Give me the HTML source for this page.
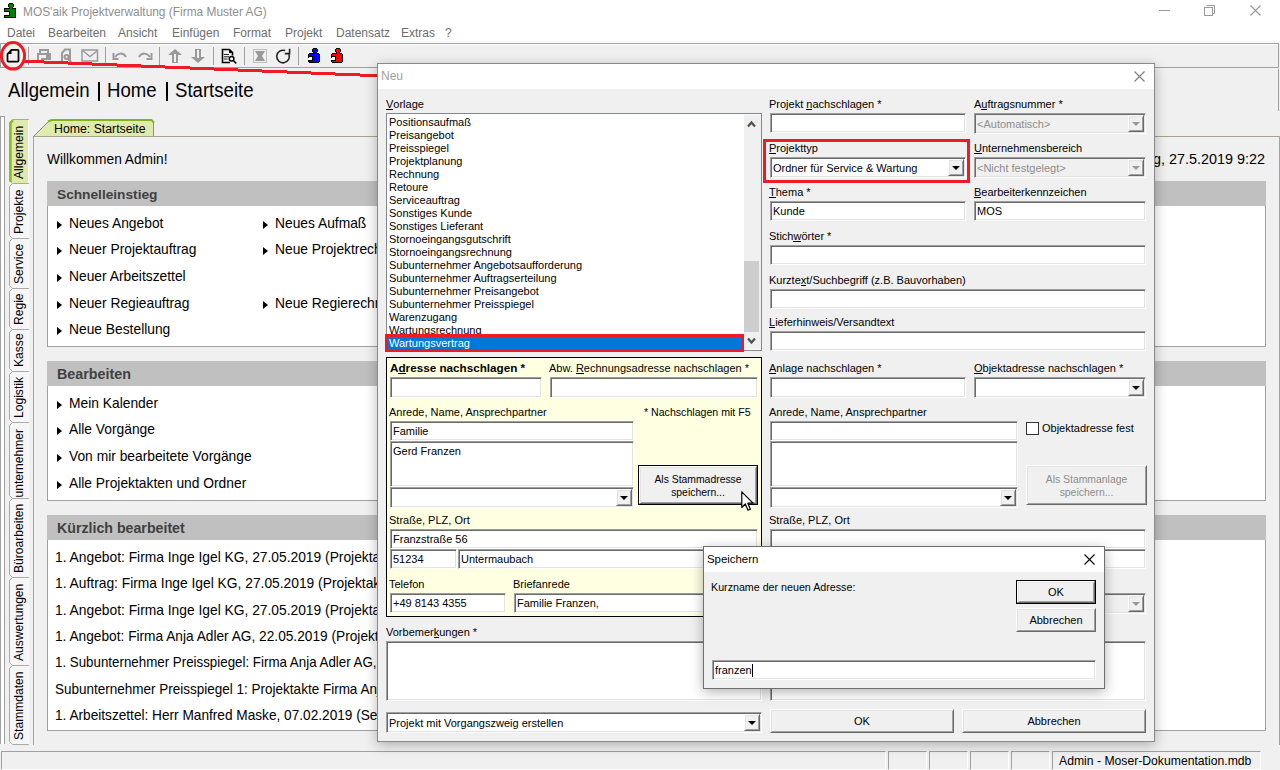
<!DOCTYPE html>
<html><head><meta charset="utf-8"><style>
html,body{margin:0;padding:0}
body{width:1280px;height:770px;overflow:hidden;position:relative;background:#f0f0f0;font-family:"Liberation Sans",sans-serif}
.a{position:absolute}
.t{position:absolute;white-space:nowrap;line-height:20px;font-family:"Liberation Sans",sans-serif}
.sk{border:1px solid;border-color:#a0a0a0 #fff #fff #a0a0a0;box-shadow:inset 1px 1px #696969,inset -1px -1px #e3e3e3}
.rs{border:1px solid;border-color:#fff #696969 #696969 #fff;box-shadow:inset 1px 1px #e3e3e3,inset -1px -1px #a0a0a0;background:#f0f0f0}
u{text-decoration:none;border-bottom:1px solid currentColor;line-height:10px;display:inline-block}
</style></head><body>

<div class="a" style="left:0px;top:0px;width:1280px;height:43px;background:#fff"></div>
<svg class="a" style="left:0;top:0" width="20" height="20" shape-rendering="crispEdges"><rect x="9" y="3" width="4" height="1" fill="#000"/><rect x="8" y="4" width="1" height="1" fill="#000"/><rect x="13" y="4" width="1" height="1" fill="#000"/><rect x="9" y="4" width="4" height="1" fill="#008000"/><rect x="8" y="5" width="1" height="1" fill="#000"/><rect x="13" y="5" width="1" height="1" fill="#000"/><rect x="9" y="5" width="4" height="1" fill="#008000"/><rect x="8" y="6" width="1" height="1" fill="#000"/><rect x="13" y="6" width="1" height="1" fill="#000"/><rect x="9" y="6" width="4" height="1" fill="#008000"/><rect x="9" y="7" width="1" height="1" fill="#000"/><rect x="12" y="7" width="1" height="1" fill="#000"/><rect x="10" y="7" width="2" height="1" fill="#008000"/><rect x="4" y="8" width="6" height="1" fill="#000"/><rect x="12" y="8" width="4" height="1" fill="#000"/><rect x="10" y="8" width="2" height="1" fill="#008000"/><rect x="4" y="9" width="1" height="1" fill="#000"/><rect x="15" y="9" width="1" height="1" fill="#000"/><rect x="5" y="9" width="10" height="1" fill="#008000"/><rect x="4" y="10" width="1" height="1" fill="#000"/><rect x="15" y="10" width="1" height="1" fill="#000"/><rect x="5" y="10" width="10" height="1" fill="#008000"/><rect x="4" y="11" width="6" height="1" fill="#000"/><rect x="15" y="11" width="1" height="1" fill="#000"/><rect x="10" y="11" width="5" height="1" fill="#008000"/><rect x="4" y="12" width="5" height="1" fill="#fff"/><rect x="9" y="12" width="1" height="1" fill="#000"/><rect x="15" y="12" width="1" height="1" fill="#000"/><rect x="10" y="12" width="5" height="1" fill="#008000"/><rect x="4" y="13" width="5" height="1" fill="#fff"/><rect x="9" y="13" width="1" height="1" fill="#000"/><rect x="15" y="13" width="1" height="1" fill="#000"/><rect x="10" y="13" width="5" height="1" fill="#008000"/><rect x="4" y="14" width="5" height="1" fill="#fff"/><rect x="9" y="14" width="1" height="1" fill="#000"/><rect x="15" y="14" width="1" height="1" fill="#000"/><rect x="10" y="14" width="5" height="1" fill="#008000"/><rect x="4" y="15" width="6" height="1" fill="#000"/><rect x="15" y="15" width="1" height="1" fill="#000"/><rect x="10" y="15" width="5" height="1" fill="#008000"/><rect x="4" y="16" width="1" height="1" fill="#000"/><rect x="15" y="16" width="1" height="1" fill="#000"/><rect x="5" y="16" width="10" height="1" fill="#008000"/><rect x="4" y="17" width="12" height="1" fill="#000"/></svg>
<div class="t " style="left:23px;top:2px;font-size:12.6px;color:#8f8f8f;transform:scaleX(0.945);transform-origin:0 0;">MOS'aik Projektverwaltung (Firma Muster AG)</div>
<div class="t " style="left:7px;top:23px;font-size:12px;color:#6d6d6d;">Datei</div>
<div class="t " style="left:48px;top:23px;font-size:12px;color:#6d6d6d;">Bearbeiten</div>
<div class="t " style="left:118px;top:23px;font-size:12px;color:#6d6d6d;">Ansicht</div>
<div class="t " style="left:172px;top:23px;font-size:12px;color:#6d6d6d;">Einfügen</div>
<div class="t " style="left:233px;top:23px;font-size:12px;color:#6d6d6d;">Format</div>
<div class="t " style="left:285px;top:23px;font-size:12px;color:#6d6d6d;">Projekt</div>
<div class="t " style="left:336px;top:23px;font-size:12px;color:#6d6d6d;">Datensatz</div>
<div class="t " style="left:401px;top:23px;font-size:12px;color:#6d6d6d;">Extras</div>
<div class="t " style="left:445px;top:23px;font-size:12px;color:#6d6d6d;">?</div>
<div class="a" style="left:1159px;top:10px;width:11px;height:1px;background:#999"></div>
<svg class="a" style="left:1202px;top:3px" width="14" height="14"><path d="M4.5 2.5h8v8h-2" fill="none" stroke="#999"/><rect x="2.5" y="4.5" width="8" height="8" fill="none" stroke="#999"/></svg>
<svg class="a" style="left:1250px;top:5px" width="11" height="11"><path d="M0.5 0.5L10.5 10.5M10.5 0.5L0.5 10.5" stroke="#999" stroke-width="1.1"/></svg>
<div class="a" style="left:0px;top:41px;width:1280px;height:1px;background:#f6f6f6"></div>
<div class="a" style="left:0px;top:43px;width:1279px;height:25px;border:1px solid #a0a0a0;box-sizing:border-box;background:#f0f0f0;box-shadow:inset 1px 1px #fff"></div>
<div class="a" style="left:28px;top:47px;width:1px;height:18px;background:#a0a0a0"></div>
<div class="a" style="left:105px;top:47px;width:1px;height:18px;background:#a0a0a0"></div>
<div class="a" style="left:159px;top:47px;width:1px;height:18px;background:#a0a0a0"></div>
<div class="a" style="left:213px;top:47px;width:1px;height:18px;background:#a0a0a0"></div>
<div class="a" style="left:244px;top:47px;width:1px;height:18px;background:#a0a0a0"></div>
<div class="a" style="left:298px;top:47px;width:1px;height:18px;background:#a0a0a0"></div>
<svg class="a" style="left:6px;top:48px" width="15" height="16"><path d="M5.5 1.8h6.2q0.8 0 0.8 0.8v10.2q0 0.8-0.8 0.8h-9.4q-0.8 0-0.8-0.8v-6.8z" fill="none" stroke="#000" stroke-width="1.7" stroke-linejoin="round"/><path d="M1.5 6L5.5 2V6Z" fill="#000"/></svg>
<svg class="a" style="left:37px;top:49px" width="14" height="12" shape-rendering="crispEdges"><g fill="#9a9a9a"><rect x="2" y="0" width="10" height="2"/><rect x="2" y="0" width="2" height="5"/><rect x="10" y="0" width="2" height="5"/><rect x="0" y="4" width="14" height="2"/><rect x="0" y="4" width="2" height="7"/><rect x="9" y="5" width="5" height="4"/><rect x="12" y="4" width="2" height="7"/><rect x="4" y="9" width="8" height="2"/></g></svg>
<svg class="a" style="left:60px;top:48px" width="14" height="16"><path d="M2 13V5L5 1.5H10V13" fill="none" stroke="#9a9a9a" stroke-width="2"/><circle cx="6.5" cy="9" r="2" fill="none" stroke="#9a9a9a" stroke-width="2"/><path d="M8 11L12 15" stroke="#9a9a9a" stroke-width="2"/></svg>
<svg class="a" style="left:81px;top:49px" width="18" height="13"><rect x="1" y="1" width="15.5" height="11" fill="none" stroke="#9a9a9a" stroke-width="1.5"/><path d="M1.5 1.5l7.5 6l7.5-6" fill="none" stroke="#9a9a9a" stroke-width="1.5"/></svg>
<svg class="a" style="left:112px;top:51px" width="18" height="10"><path d="M3 6c3-4 8-5 11 0" fill="none" stroke="#9a9a9a" stroke-width="2"/><path d="M1.5 2v6h5" fill="none" stroke="#9a9a9a" stroke-width="2"/></svg>
<svg class="a" style="left:135px;top:51px" width="18" height="10"><path d="M15 6c-3-4-8-5-11 0" fill="none" stroke="#9a9a9a" stroke-width="2"/><path d="M16.5 2v6h-5" fill="none" stroke="#9a9a9a" stroke-width="2"/></svg>
<svg class="a" style="left:167px;top:48px" width="16" height="16"><path d="M8 1l7 6h-4v8h-6v-8h-4z" fill="#9a9a9a"/><rect x="7" y="6" width="2" height="8" fill="#f0f0f0"/></svg>
<svg class="a" style="left:190px;top:48px" width="16" height="16"><path d="M8 15l7-6h-4v-8h-6v8h-4z" fill="#9a9a9a"/><rect x="7" y="2" width="2" height="8" fill="#f0f0f0"/></svg>
<svg class="a" style="left:221px;top:48px" width="17" height="17"><path d="M8.5 1.5H1.5V14.5H9M8.5 1.5L11.5 4.5V7.5" fill="none" stroke="#000" stroke-width="1.6"/><path d="M8 1V5H12Z" fill="#000"/><path d="M3 6.5h5M3 8.8h5M3 11h3.5" stroke="#222" stroke-width="1.1"/><circle cx="10.6" cy="10.8" r="2.3" fill="#fff" stroke="#000" stroke-width="1.5"/><path d="M12.3 12.5L15.2 15.4" stroke="#000" stroke-width="1.6"/></svg>
<svg class="a" style="left:252px;top:48px" width="16" height="16"><rect x="1.5" y="1.5" width="13" height="13" fill="none" stroke="#c0c0c0"/><path d="M3 3h10l-3 5l3 5h-10l3-5z" fill="#9a9a9a"/></svg>
<svg class="a" style="left:275px;top:48px" width="17" height="17"><path d="M10.15 2.58A6.3 6.3 0 1 0 13.9 6.2" fill="none" stroke="#222" stroke-width="1.6"/><path d="M9.8 5.6H14.6V0.8" fill="none" stroke="#222" stroke-width="1.6"/></svg>
<svg class="a" style="left:308px;top:48px" width="12" height="15" shape-rendering="crispEdges"><rect x="5" y="0" width="4" height="1" fill="#000"/><rect x="4" y="1" width="1" height="1" fill="#000"/><rect x="9" y="1" width="1" height="1" fill="#000"/><rect x="5" y="1" width="4" height="1" fill="#0000ff"/><rect x="4" y="2" width="1" height="1" fill="#000"/><rect x="9" y="2" width="1" height="1" fill="#000"/><rect x="5" y="2" width="4" height="1" fill="#0000ff"/><rect x="4" y="3" width="1" height="1" fill="#000"/><rect x="9" y="3" width="1" height="1" fill="#000"/><rect x="5" y="3" width="4" height="1" fill="#0000ff"/><rect x="5" y="4" width="1" height="1" fill="#000"/><rect x="8" y="4" width="1" height="1" fill="#000"/><rect x="6" y="4" width="2" height="1" fill="#0000ff"/><rect x="1" y="5" width="5" height="1" fill="#000"/><rect x="8" y="5" width="3" height="1" fill="#000"/><rect x="6" y="5" width="2" height="1" fill="#0000ff"/><rect x="0" y="6" width="1" height="1" fill="#000"/><rect x="11" y="6" width="1" height="1" fill="#000"/><rect x="1" y="6" width="10" height="1" fill="#0000ff"/><rect x="0" y="7" width="1" height="1" fill="#000"/><rect x="11" y="7" width="1" height="1" fill="#000"/><rect x="1" y="7" width="10" height="1" fill="#0000ff"/><rect x="0" y="8" width="5" height="1" fill="#000"/><rect x="11" y="8" width="1" height="1" fill="#000"/><rect x="5" y="8" width="6" height="1" fill="#0000ff"/><rect x="0" y="9" width="1" height="1" fill="#000"/><rect x="4" y="9" width="1" height="1" fill="#000"/><rect x="11" y="9" width="1" height="1" fill="#000"/><rect x="1" y="9" width="3" height="1" fill="#fff"/><rect x="5" y="9" width="6" height="1" fill="#0000ff"/><rect x="0" y="10" width="4" height="1" fill="#fff"/><rect x="4" y="10" width="1" height="1" fill="#000"/><rect x="11" y="10" width="1" height="1" fill="#000"/><rect x="5" y="10" width="6" height="1" fill="#0000ff"/><rect x="0" y="11" width="4" height="1" fill="#fff"/><rect x="4" y="11" width="1" height="1" fill="#000"/><rect x="11" y="11" width="1" height="1" fill="#000"/><rect x="5" y="11" width="6" height="1" fill="#0000ff"/><rect x="0" y="12" width="5" height="1" fill="#000"/><rect x="11" y="12" width="1" height="1" fill="#000"/><rect x="5" y="12" width="6" height="1" fill="#0000ff"/><rect x="0" y="13" width="1" height="1" fill="#000"/><rect x="11" y="13" width="1" height="1" fill="#000"/><rect x="1" y="13" width="10" height="1" fill="#0000ff"/><rect x="1" y="14" width="10" height="1" fill="#000"/></svg>
<svg class="a" style="left:331px;top:48px" width="12" height="15" shape-rendering="crispEdges"><rect x="5" y="0" width="4" height="1" fill="#000"/><rect x="4" y="1" width="1" height="1" fill="#000"/><rect x="9" y="1" width="1" height="1" fill="#000"/><rect x="5" y="1" width="4" height="1" fill="#ff0000"/><rect x="4" y="2" width="1" height="1" fill="#000"/><rect x="9" y="2" width="1" height="1" fill="#000"/><rect x="5" y="2" width="4" height="1" fill="#ff0000"/><rect x="4" y="3" width="1" height="1" fill="#000"/><rect x="9" y="3" width="1" height="1" fill="#000"/><rect x="5" y="3" width="4" height="1" fill="#ff0000"/><rect x="5" y="4" width="1" height="1" fill="#000"/><rect x="8" y="4" width="1" height="1" fill="#000"/><rect x="6" y="4" width="2" height="1" fill="#ff0000"/><rect x="1" y="5" width="5" height="1" fill="#000"/><rect x="8" y="5" width="3" height="1" fill="#000"/><rect x="6" y="5" width="2" height="1" fill="#ff0000"/><rect x="0" y="6" width="1" height="1" fill="#000"/><rect x="11" y="6" width="1" height="1" fill="#000"/><rect x="1" y="6" width="10" height="1" fill="#ff0000"/><rect x="0" y="7" width="1" height="1" fill="#000"/><rect x="11" y="7" width="1" height="1" fill="#000"/><rect x="1" y="7" width="10" height="1" fill="#ff0000"/><rect x="0" y="8" width="5" height="1" fill="#000"/><rect x="11" y="8" width="1" height="1" fill="#000"/><rect x="5" y="8" width="6" height="1" fill="#ff0000"/><rect x="0" y="9" width="1" height="1" fill="#000"/><rect x="4" y="9" width="1" height="1" fill="#000"/><rect x="11" y="9" width="1" height="1" fill="#000"/><rect x="1" y="9" width="3" height="1" fill="#fff"/><rect x="5" y="9" width="6" height="1" fill="#ff0000"/><rect x="0" y="10" width="4" height="1" fill="#fff"/><rect x="4" y="10" width="1" height="1" fill="#000"/><rect x="11" y="10" width="1" height="1" fill="#000"/><rect x="5" y="10" width="6" height="1" fill="#ff0000"/><rect x="0" y="11" width="4" height="1" fill="#fff"/><rect x="4" y="11" width="1" height="1" fill="#000"/><rect x="11" y="11" width="1" height="1" fill="#000"/><rect x="5" y="11" width="6" height="1" fill="#ff0000"/><rect x="0" y="12" width="5" height="1" fill="#000"/><rect x="11" y="12" width="1" height="1" fill="#000"/><rect x="5" y="12" width="6" height="1" fill="#ff0000"/><rect x="0" y="13" width="1" height="1" fill="#000"/><rect x="11" y="13" width="1" height="1" fill="#000"/><rect x="1" y="13" width="10" height="1" fill="#ff0000"/><rect x="1" y="14" width="10" height="1" fill="#000"/></svg>
<div class="a" style="left:1278px;top:69px;width:1px;height:42px;background:#a0a0a0"></div>
<div class="t " style="left:8px;top:80px;font-size:20px;color:#000;transform:scaleX(0.93);transform-origin:0 0;">Allgemein</div>
<div class="t " style="left:107px;top:80px;font-size:20px;color:#000;transform:scaleX(0.93);transform-origin:0 0;">Home</div>
<div class="t " style="left:175px;top:80px;font-size:20px;color:#000;transform:scaleX(0.93);transform-origin:0 0;">Startseite</div>
<div class="a" style="left:98px;top:82px;width:2px;height:19px;background:#000"></div>
<div class="a" style="left:166px;top:82px;width:2px;height:19px;background:#000"></div>
<div class="a" style="left:0px;top:116px;width:5px;height:628px;border:1px solid #a0a0a0;border-bottom:none;background:#fff;box-sizing:border-box"></div>
<div class="a" style="left:33px;top:136px;width:1247px;height:609px;border:1px solid #a8a48f;border-bottom:none;box-sizing:border-box;background:#f0f0f0"></div>
<svg class="a" style="left:0;top:119px" width="34" height="66"><path d="M12.5 0.5H28.5V64.5H12.5L9.5 61.5V3.5Z" fill="#dfeaad" stroke="#a9a9a9" stroke-width="1"/><path d="M28.5 1V64" stroke="#fafafa"/><path d="M10.5 63V4L13 1.2" fill="none" stroke="#86bd1e" stroke-width="2.4"/></svg>
<div class="t" style="font-size:12.8px;color:#000;left:12.3px;top:178.5px;transform-origin:0 0;transform:rotate(-90deg) scaleX(0.945);line-height:14px">Allgemein</div>
<svg class="a" style="left:0;top:183px" width="34" height="57"><path d="M12.5 0.5H28.5V55.5H12.5L9.5 52.5V3.5Z" fill="#f6f6f6" stroke="#a9a9a9" stroke-width="1"/><path d="M28.5 1V55" stroke="#fafafa"/></svg>
<div class="t" style="font-size:12.8px;color:#000;left:12.3px;top:233.5px;transform-origin:0 0;transform:rotate(-90deg) scaleX(0.945);line-height:14px">Projekte</div>
<svg class="a" style="left:0;top:238px" width="34" height="52"><path d="M12.5 0.5H28.5V50.5H12.5L9.5 47.5V3.5Z" fill="#f6f6f6" stroke="#a9a9a9" stroke-width="1"/><path d="M28.5 1V50" stroke="#fafafa"/></svg>
<div class="t" style="font-size:12.8px;color:#000;left:12.3px;top:283.5px;transform-origin:0 0;transform:rotate(-90deg) scaleX(0.945);line-height:14px">Service</div>
<svg class="a" style="left:0;top:288px" width="34" height="43"><path d="M12.5 0.5H28.5V41.5H12.5L9.5 38.5V3.5Z" fill="#f6f6f6" stroke="#a9a9a9" stroke-width="1"/><path d="M28.5 1V41" stroke="#fafafa"/></svg>
<div class="t" style="font-size:12.8px;color:#000;left:12.3px;top:324.5px;transform-origin:0 0;transform:rotate(-90deg) scaleX(0.945);line-height:14px">Regie</div>
<svg class="a" style="left:0;top:329px" width="34" height="44"><path d="M12.5 0.5H28.5V42.5H12.5L9.5 39.5V3.5Z" fill="#f6f6f6" stroke="#a9a9a9" stroke-width="1"/><path d="M28.5 1V42" stroke="#fafafa"/></svg>
<div class="t" style="font-size:12.8px;color:#000;left:12.3px;top:366.5px;transform-origin:0 0;transform:rotate(-90deg) scaleX(0.945);line-height:14px">Kasse</div>
<svg class="a" style="left:0;top:371px" width="34" height="53"><path d="M12.5 0.5H28.5V51.5H12.5L9.5 48.5V3.5Z" fill="#f6f6f6" stroke="#a9a9a9" stroke-width="1"/><path d="M28.5 1V51" stroke="#fafafa"/></svg>
<div class="t" style="font-size:12.8px;color:#000;left:12.3px;top:417.5px;transform-origin:0 0;transform:rotate(-90deg) scaleX(0.945);line-height:14px">Logistik</div>
<svg class="a" style="left:0;top:422px" width="34" height="78"><path d="M12.5 0.5H28.5V76.5H12.5L9.5 73.5V3.5Z" fill="#f6f6f6" stroke="#a9a9a9" stroke-width="1"/><path d="M28.5 1V76" stroke="#fafafa"/></svg>
<div class="t" style="font-size:12.8px;color:#000;left:12.3px;top:519px;transform-origin:0 0;transform:rotate(-90deg) scaleX(0.945);line-height:14px">Subunternehmer</div>
<svg class="a" style="left:0;top:498px" width="34" height="81"><path d="M12.5 0.5H28.5V79.5H12.5L9.5 76.5V3.5Z" fill="#f6f6f6" stroke="#a9a9a9" stroke-width="1"/><path d="M28.5 1V79" stroke="#fafafa"/></svg>
<div class="t" style="font-size:12.8px;color:#000;left:12.3px;top:572.5px;transform-origin:0 0;transform:rotate(-90deg) scaleX(0.945);line-height:14px">Büroarbeiten</div>
<svg class="a" style="left:0;top:577px" width="34" height="90"><path d="M12.5 0.5H28.5V88.5H12.5L9.5 85.5V3.5Z" fill="#f6f6f6" stroke="#a9a9a9" stroke-width="1"/><path d="M28.5 1V88" stroke="#fafafa"/></svg>
<div class="t" style="font-size:12.8px;color:#000;left:12.3px;top:660.5px;transform-origin:0 0;transform:rotate(-90deg) scaleX(0.945);line-height:14px">Auswertungen</div>
<svg class="a" style="left:0;top:665px" width="34" height="81"><path d="M12.5 0.5H28.5V79.5H12.5L9.5 76.5V3.5Z" fill="#f6f6f6" stroke="#a9a9a9" stroke-width="1"/><path d="M28.5 1V79" stroke="#fafafa"/></svg>
<div class="t" style="font-size:12.8px;color:#000;left:12.3px;top:739.5px;transform-origin:0 0;transform:rotate(-90deg) scaleX(0.945);line-height:14px">Stammdaten</div>
<svg class="a" style="left:33px;top:118px" width="122" height="19"><path d="M1 18L16 3L19 1.5H118L120.5 4V18" fill="#dfeaad" stroke="none"/><path d="M0.5 18.5L15.5 3.5" stroke="#8a8a8a" stroke-width="1"/><path d="M15 3.5L18.5 2H118.5L121 4.5" fill="none" stroke="#7fb51b" stroke-width="2"/><path d="M120.5 4V18" stroke="#8f8f8f"/></svg>
<div class="t " style="left:54px;top:119px;font-size:12.3px;color:#000;">Home: Startseite</div>
<div class="t " style="left:47px;top:149px;font-size:14.5px;color:#000;transform:scaleX(0.947);transform-origin:0 0;">Willkommen Admin!</div>
<div class="t " style="left:1153px;top:149px;font-size:14.4px;color:#000;">g, 27.5.2019 9:22</div>
<div class="a" style="left:47px;top:181px;width:1219px;height:25px;background:#c0c0c0"></div>
<div class="a" style="left:47px;top:206px;width:1219px;height:141px;background:#fff;border:1px solid #a0a0a0;border-top:none;box-sizing:border-box"></div>
<div class="t " style="left:57px;top:185px;font-size:13.7px;color:#404040;font-weight:bold;">Schnelleinstieg</div>
<div class="a" style="left:57px;top:221px;width:0;height:0;border-top:4px solid transparent;border-bottom:4px solid transparent;border-left:5px solid #000"></div>
<div class="t " style="left:69px;top:213px;font-size:14.5px;color:#000;transform:scaleX(0.952);transform-origin:0 0;">Neues Angebot</div>
<div class="a" style="left:263px;top:221px;width:0;height:0;border-top:4px solid transparent;border-bottom:4px solid transparent;border-left:5px solid #000"></div>
<div class="t " style="left:275px;top:213px;font-size:14.5px;color:#000;transform:scaleX(0.952);transform-origin:0 0;">Neues Aufmaß</div>
<div class="a" style="left:57px;top:247px;width:0;height:0;border-top:4px solid transparent;border-bottom:4px solid transparent;border-left:5px solid #000"></div>
<div class="t " style="left:69px;top:239px;font-size:14.5px;color:#000;transform:scaleX(0.952);transform-origin:0 0;">Neuer Projektauftrag</div>
<div class="a" style="left:263px;top:247px;width:0;height:0;border-top:4px solid transparent;border-bottom:4px solid transparent;border-left:5px solid #000"></div>
<div class="t " style="left:275px;top:239px;font-size:14.5px;color:#000;transform:scaleX(0.952);transform-origin:0 0;">Neue Projektrechnung</div>
<div class="a" style="left:57px;top:274px;width:0;height:0;border-top:4px solid transparent;border-bottom:4px solid transparent;border-left:5px solid #000"></div>
<div class="t " style="left:69px;top:266px;font-size:14.5px;color:#000;transform:scaleX(0.952);transform-origin:0 0;">Neuer Arbeitszettel</div>
<div class="a" style="left:57px;top:301px;width:0;height:0;border-top:4px solid transparent;border-bottom:4px solid transparent;border-left:5px solid #000"></div>
<div class="t " style="left:69px;top:293px;font-size:14.5px;color:#000;transform:scaleX(0.952);transform-origin:0 0;">Neuer Regieauftrag</div>
<div class="a" style="left:263px;top:301px;width:0;height:0;border-top:4px solid transparent;border-bottom:4px solid transparent;border-left:5px solid #000"></div>
<div class="t " style="left:275px;top:293px;font-size:14.5px;color:#000;transform:scaleX(0.952);transform-origin:0 0;">Neue Regierechnung</div>
<div class="a" style="left:57px;top:327px;width:0;height:0;border-top:4px solid transparent;border-bottom:4px solid transparent;border-left:5px solid #000"></div>
<div class="t " style="left:69px;top:319px;font-size:14.5px;color:#000;transform:scaleX(0.952);transform-origin:0 0;">Neue Bestellung</div>
<div class="a" style="left:47px;top:361px;width:1219px;height:25px;background:#c0c0c0"></div>
<div class="a" style="left:47px;top:386px;width:1219px;height:115px;background:#fff;border:1px solid #a0a0a0;border-top:none;box-sizing:border-box"></div>
<div class="t " style="left:57px;top:364px;font-size:14.3px;color:#404040;font-weight:bold;">Bearbeiten</div>
<div class="a" style="left:57px;top:401px;width:0;height:0;border-top:4px solid transparent;border-bottom:4px solid transparent;border-left:5px solid #000"></div>
<div class="t " style="left:69px;top:393px;font-size:14.5px;color:#000;transform:scaleX(0.952);transform-origin:0 0;">Mein Kalender</div>
<div class="a" style="left:57px;top:427px;width:0;height:0;border-top:4px solid transparent;border-bottom:4px solid transparent;border-left:5px solid #000"></div>
<div class="t " style="left:69px;top:419px;font-size:14.5px;color:#000;transform:scaleX(0.952);transform-origin:0 0;">Alle Vorgänge</div>
<div class="a" style="left:57px;top:454px;width:0;height:0;border-top:4px solid transparent;border-bottom:4px solid transparent;border-left:5px solid #000"></div>
<div class="t " style="left:69px;top:446px;font-size:14.5px;color:#000;transform:scaleX(0.952);transform-origin:0 0;">Von mir bearbeitete Vorgänge</div>
<div class="a" style="left:57px;top:481px;width:0;height:0;border-top:4px solid transparent;border-bottom:4px solid transparent;border-left:5px solid #000"></div>
<div class="t " style="left:69px;top:473px;font-size:14.5px;color:#000;transform:scaleX(0.952);transform-origin:0 0;">Alle Projektakten und Ordner</div>
<div class="a" style="left:47px;top:515px;width:1219px;height:25px;background:#c0c0c0"></div>
<div class="a" style="left:47px;top:540px;width:1219px;height:191px;background:#fff;border:1px solid #a0a0a0;border-top:none;box-sizing:border-box"></div>
<div class="t " style="left:57px;top:518px;font-size:14.2px;color:#404040;font-weight:bold;">Kürzlich bearbeitet</div>
<div class="t " style="left:55px;top:547px;font-size:14.5px;color:#000;transform:scaleX(0.9517);transform-origin:0 0;">1. Angebot: Firma Inge Igel KG, 27.05.2019 (Projektakte Firma Inge Igel KG)</div>
<div class="t " style="left:55px;top:573px;font-size:14.5px;color:#000;transform:scaleX(0.9517);transform-origin:0 0;">1. Auftrag: Firma Inge Igel KG, 27.05.2019 (Projektakte Firma Inge Igel KG)</div>
<div class="t " style="left:55px;top:600px;font-size:14.5px;color:#000;transform:scaleX(0.9517);transform-origin:0 0;">1. Angebot: Firma Inge Igel KG, 27.05.2019 (Projektakte Firma Inge Igel KG)</div>
<div class="t " style="left:55px;top:626px;font-size:14.5px;color:#000;transform:scaleX(0.9448);transform-origin:0 0;">1. Angebot: Firma Anja Adler AG, 22.05.2019 (Projektakte Firma Anja Adler AG)</div>
<div class="t " style="left:55px;top:652px;font-size:14.5px;color:#000;transform:scaleX(0.9193);transform-origin:0 0;">1. Subunternehmer Preisspiegel: Firma Anja Adler AG, 22.05.2019</div>
<div class="t " style="left:55px;top:679px;font-size:14.5px;color:#000;transform:scaleX(0.9310);transform-origin:0 0;">Subunternehmer Preisspiegel 1: Projektakte Firma Anja Adler AG</div>
<div class="t " style="left:55px;top:705px;font-size:14.5px;color:#000;transform:scaleX(0.9414);transform-origin:0 0;">1. Arbeitszettel: Herr Manfred Maske, 07.02.2019 (Serviceakte)</div>
<div class="a" style="left:0px;top:751px;width:1280px;height:19px;background:#f0f0f0"></div>
<div class="a" style="left:1px;top:751px;width:885px;height:19px;border:1px solid;border-color:#a0a0a0 #fff #fff #a0a0a0;box-sizing:border-box"></div>
<div class="a" style="left:888px;top:751px;width:39px;height:19px;border:1px solid;border-color:#a0a0a0 #fff #fff #a0a0a0;box-sizing:border-box"></div>
<div class="a" style="left:929px;top:751px;width:39px;height:19px;border:1px solid;border-color:#a0a0a0 #fff #fff #a0a0a0;box-sizing:border-box"></div>
<div class="a" style="left:970px;top:751px;width:39px;height:19px;border:1px solid;border-color:#a0a0a0 #fff #fff #a0a0a0;box-sizing:border-box"></div>
<div class="a" style="left:1011px;top:751px;width:39px;height:19px;border:1px solid;border-color:#a0a0a0 #fff #fff #a0a0a0;box-sizing:border-box"></div>
<div class="a" style="left:1052px;top:751px;width:209px;height:19px;border:1px solid;border-color:#a0a0a0 #fff #fff #a0a0a0;box-sizing:border-box"></div>
<div class="t " style="left:1059px;top:751px;font-size:12.2px;color:#000;">Admin - Moser-Dokumentation.mdb</div>
<svg class="a" style="left:0;top:0" width="400" height="90" shape-rendering="crispEdges"><path d="M24 61.2L379 75.8" stroke="#ed1c24" stroke-width="3"/></svg>
<svg class="a" style="left:0;top:39px" width="30" height="34"><ellipse cx="13" cy="16.8" rx="11.6" ry="13.3" fill="none" stroke="#ed1c24" stroke-width="3"/></svg>
<div class="a" style="left:377px;top:63px;width:778px;height:679px;box-shadow:0 3px 12px rgba(0,0,0,0.28);border:1px solid #8a8a8a;box-sizing:border-box;background:#f0f0f0"></div>
<div class="a" style="left:378px;top:64px;width:776px;height:25px;background:#fff"></div>
<div class="t " style="left:381px;top:66px;font-size:12px;color:#a0a0a0;">Neu</div>
<svg class="a" style="left:1134px;top:71px" width="11" height="11"><path d="M0.5 0.5L10.5 10.5M10.5 0.5L0.5 10.5" stroke="#7a7a7a" stroke-width="1.1"/></svg>
<div class="t " style="left:386px;top:94px;font-size:11px;color:#000;"><u>V</u>orlage</div>
<div class="t " style="left:769px;top:94px;font-size:11px;color:#000;">Projekt <u>n</u>achschlagen *</div>
<div class="t " style="left:974px;top:94px;font-size:11px;color:#000;">A<u>u</u>ftragsnummer *</div>
<div class="a" style="left:386px;top:113px;width:376px;height:238px;border:1px solid #828790;background:#fff;box-sizing:border-box"></div>
<div class="a" style="left:387px;top:114px;width:357px;height:220px;overflow:hidden">
<div class="t" style="left:2px;top:-2px;font-size:11px">Positionsaufmaß</div>
<div class="t" style="left:2px;top:11px;font-size:11px">Preisangebot</div>
<div class="t" style="left:2px;top:24px;font-size:11px">Preisspiegel</div>
<div class="t" style="left:2px;top:37px;font-size:11px">Projektplanung</div>
<div class="t" style="left:2px;top:50px;font-size:11px">Rechnung</div>
<div class="t" style="left:2px;top:63px;font-size:11px">Retoure</div>
<div class="t" style="left:2px;top:76px;font-size:11px">Serviceauftrag</div>
<div class="t" style="left:2px;top:89px;font-size:11px">Sonstiges Kunde</div>
<div class="t" style="left:2px;top:102px;font-size:11px">Sonstiges Lieferant</div>
<div class="t" style="left:2px;top:115px;font-size:11px">Stornoeingangsgutschrift</div>
<div class="t" style="left:2px;top:128px;font-size:11px">Stornoeingangsrechnung</div>
<div class="t" style="left:2px;top:141px;font-size:11px">Subunternehmer Angebotsaufforderung</div>
<div class="t" style="left:2px;top:154px;font-size:11px">Subunternehmer Auftragserteilung</div>
<div class="t" style="left:2px;top:167px;font-size:11px">Subunternehmer Preisangebot</div>
<div class="t" style="left:2px;top:180px;font-size:11px">Subunternehmer Preisspiegel</div>
<div class="t" style="left:2px;top:193px;font-size:11px">Warenzugang</div>
<div class="t" style="left:2px;top:206px;font-size:11px">Wartungsrechnung</div>
</div>
<div class="a" style="left:388px;top:337px;width:354px;height:12px;background:#0078d7"></div>
<div class="t " style="left:389px;top:333px;font-size:11px;color:#fff;">Wartungsvertrag</div>
<div class="a" style="left:744px;top:115px;width:17px;height:234px;background:#f0f0f0"></div>
<div class="a" style="left:744px;top:261px;width:15px;height:71px;background:#cdcdcd"></div>
<svg class="a" style="left:747px;top:120px" width="9" height="8"><path d="M1 6.5L4.5 2.5L8 6.5" fill="none" stroke="#505050" stroke-width="2.2"/></svg>
<svg class="a" style="left:747px;top:337px" width="9" height="8"><path d="M1 1.5L4.5 5.5L8 1.5" fill="none" stroke="#505050" stroke-width="2.2"/></svg>
<div class="a" style="left:385px;top:334px;width:359px;height:18px;border:3px solid #ed1c24;box-sizing:border-box"></div>
<div class="a sk" style="left:770px;top:113px;width:194px;height:18px;background:#fff"></div>
<div class="a sk" style="left:974px;top:113px;width:170px;height:19px;background:#f0f0f0"></div>
<div class="t " style="left:977px;top:114px;font-size:11px;color:#8d8d8d;">&lt;Automatisch&gt;</div>
<div class="a rs" style="left:1128px;top:115px;width:14px;height:15px;"></div>
<div class="a" style="left:1132px;top:122px;width:0;height:0;border-left:4px solid transparent;border-right:4px solid transparent;border-top:4px solid #999"></div>
<div class="t " style="left:769px;top:138px;font-size:11px;color:#000;"><u>P</u>rojekttyp</div>
<div class="t " style="left:974px;top:138px;font-size:11px;color:#000;"><u>U</u>nternehmensbereich</div>
<div class="a sk" style="left:770px;top:157px;width:194px;height:19px;background:#fff"></div>
<div class="t " style="left:773px;top:158px;font-size:11px;color:#000;">Ordner für Service &amp; Wartung</div>
<div class="a rs" style="left:948px;top:159px;width:14px;height:15px;"></div>
<div class="a" style="left:952px;top:166px;width:0;height:0;border-left:4px solid transparent;border-right:4px solid transparent;border-top:4px solid #000"></div>
<div class="a sk" style="left:974px;top:157px;width:170px;height:19px;background:#f0f0f0"></div>
<div class="t " style="left:977px;top:158px;font-size:11px;color:#8d8d8d;">&lt;Nicht festgelegt&gt;</div>
<div class="a rs" style="left:1128px;top:159px;width:14px;height:15px;"></div>
<div class="a" style="left:1132px;top:166px;width:0;height:0;border-left:4px solid transparent;border-right:4px solid transparent;border-top:4px solid #999"></div>
<div class="a" style="left:763px;top:139px;width:207px;height:44px;border:3px solid #ed1c24;box-sizing:border-box"></div>
<div class="t " style="left:769px;top:182px;font-size:11px;color:#000;"><u>T</u>hema *</div>
<div class="t " style="left:974px;top:182px;font-size:11px;color:#000;"><u>B</u>earbeiterkennzeichen</div>
<div class="a sk" style="left:770px;top:201px;width:194px;height:18px;background:#fff"></div>
<div class="t " style="left:773px;top:201px;font-size:11px;color:#000;">Kunde</div>
<div class="a sk" style="left:974px;top:201px;width:170px;height:18px;background:#fff"></div>
<div class="t " style="left:977px;top:201px;font-size:11px;color:#000;">MOS</div>
<div class="t " style="left:769px;top:226px;font-size:11px;color:#000;">Stich<u>w</u>örter *</div>
<div class="a sk" style="left:770px;top:245px;width:374px;height:18px;background:#fff"></div>
<div class="t " style="left:769px;top:270px;font-size:11px;color:#000;">Kurzte<u>x</u>t/Suchbegriff (z.B. Bauvorhaben)</div>
<div class="a sk" style="left:770px;top:289px;width:374px;height:18px;background:#fff"></div>
<div class="t " style="left:769px;top:312px;font-size:11px;color:#000;"><u>L</u>ieferhinweis/Versandtext</div>
<div class="a sk" style="left:770px;top:331px;width:374px;height:18px;background:#fff"></div>
<div class="t " style="left:769px;top:358px;font-size:11px;color:#000;"><u>A</u>nlage nachschlagen *</div>
<div class="t " style="left:974px;top:358px;font-size:11px;color:#000;"><u>O</u>bjektadresse nachschlagen *</div>
<div class="a sk" style="left:770px;top:377px;width:194px;height:19px;background:#fff"></div>
<div class="a sk" style="left:974px;top:377px;width:170px;height:19px;background:#fff"></div>
<div class="a rs" style="left:1128px;top:379px;width:14px;height:15px;"></div>
<div class="a" style="left:1132px;top:386px;width:0;height:0;border-left:4px solid transparent;border-right:4px solid transparent;border-top:4px solid #000"></div>
<div class="t " style="left:769px;top:402px;font-size:11px;color:#000;">Anrede, Name, Ansprechpartner</div>
<div class="a sk" style="left:770px;top:421px;width:246px;height:18px;background:#fff"></div>
<div class="a sk" style="left:770px;top:441px;width:246px;height:44px;background:#fff"></div>
<div class="a sk" style="left:770px;top:487px;width:246px;height:19px;background:#fff"></div>
<div class="a rs" style="left:1000px;top:489px;width:14px;height:15px;"></div>
<div class="a" style="left:1004px;top:496px;width:0;height:0;border-left:4px solid transparent;border-right:4px solid transparent;border-top:4px solid #000"></div>
<div class="a" style="left:1026px;top:422px;width:13px;height:13px;border:1px solid #333;background:#fff;box-sizing:border-box"></div>
<div class="t " style="left:1042px;top:418px;font-size:11px;color:#000;">Objektadresse fest</div>
<div class="a rs" style="left:1026px;top:465px;width:119px;height:38px;"></div>
<div class="t" style="left:1026px;width:121px;text-align:center;top:470px;font-size:10.4px;color:#8d8d8d">Als Stammanlage</div>
<div class="t" style="left:1026px;width:121px;text-align:center;top:483px;font-size:10.4px;color:#8d8d8d">speichern...</div>
<div class="t " style="left:769px;top:510px;font-size:11px;color:#000;">Straße, PLZ, Ort</div>
<div class="a sk" style="left:770px;top:529px;width:374px;height:18px;background:#fff"></div>
<div class="a sk" style="left:770px;top:549px;width:374px;height:18px;background:#fff"></div>
<div class="a sk" style="left:974px;top:593px;width:170px;height:19px;background:#f0f0f0"></div>
<div class="a rs" style="left:1128px;top:595px;width:14px;height:15px;"></div>
<div class="a" style="left:1132px;top:602px;width:0;height:0;border-left:4px solid transparent;border-right:4px solid transparent;border-top:4px solid #999"></div>
<div class="a sk" style="left:770px;top:641px;width:374px;height:58px;background:#fff"></div>
<div class="a rs" style="left:770px;top:709px;width:182px;height:22px;"></div>
<div class="t" style="left:770px;width:184px;text-align:center;top:711px;font-size:11px;color:#000">OK</div>
<div class="a rs" style="left:962px;top:709px;width:182px;height:22px;"></div>
<div class="t" style="left:962px;width:184px;text-align:center;top:711px;font-size:11px;color:#000">Abbrechen</div>
<div class="a" style="left:386px;top:357px;width:376px;height:260px;border:1px solid #000;background:#ffffe1;box-sizing:border-box"></div>
<div class="t " style="left:390px;top:358px;font-size:11.7px;color:#000;font-weight:bold;">A<u>d</u>resse nachschlagen *</div>
<div class="t " style="left:549px;top:358px;font-size:11px;color:#000;">Abw. <u>R</u>echnungsadresse nachschlagen *</div>
<div class="a sk" style="left:390px;top:377px;width:150px;height:19px;background:#fff"></div>
<div class="a sk" style="left:550px;top:377px;width:206px;height:19px;background:#fff"></div>
<div class="t " style="left:389px;top:402px;font-size:11px;color:#000;">Anrede, Name, Ansprechpartner</div>
<div class="t " style="left:644px;top:402px;font-size:10.6px;color:#000;">* Nachschlagen mit F5</div>
<div class="a sk" style="left:390px;top:421px;width:242px;height:18px;background:#fff"></div>
<div class="t " style="left:393px;top:421px;font-size:11px;color:#000;">Familie</div>
<div class="a sk" style="left:390px;top:441px;width:242px;height:44px;background:#fff"></div>
<div class="t " style="left:393px;top:441px;font-size:11px;color:#000;">Gerd Franzen</div>
<div class="a sk" style="left:390px;top:487px;width:242px;height:19px;background:#fff"></div>
<div class="a rs" style="left:616px;top:489px;width:14px;height:15px;"></div>
<div class="a" style="left:620px;top:496px;width:0;height:0;border-left:4px solid transparent;border-right:4px solid transparent;border-top:4px solid #000"></div>
<div class="a rs" style="left:638px;top:465px;width:118px;height:38px;"></div>
<div class="a" style="left:638px;top:465px;width:120px;height:40px;border:1px solid #000;background:transparent;box-sizing:border-box;"></div>
<div class="a rs" style="left:639px;top:466px;width:116px;height:36px;"></div>
<div class="t" style="left:638px;width:120px;text-align:center;top:470px;font-size:10.4px;color:#000">Als Stammadresse</div>
<div class="t" style="left:638px;width:120px;text-align:center;top:483px;font-size:10.4px;color:#000">speichern...</div>
<div class="t " style="left:389px;top:510px;font-size:11px;color:#000;">Straße, PLZ, Ort</div>
<div class="a sk" style="left:390px;top:529px;width:366px;height:18px;background:#fff"></div>
<div class="t " style="left:393px;top:529px;font-size:11px;color:#000;">Franzstraße 56</div>
<div class="a sk" style="left:390px;top:549px;width:65px;height:18px;background:#fff"></div>
<div class="t " style="left:393px;top:549px;font-size:11px;color:#000;">51234</div>
<div class="a sk" style="left:458px;top:549px;width:298px;height:18px;background:#fff"></div>
<div class="t " style="left:461px;top:549px;font-size:11px;color:#000;">Untermaubach</div>
<div class="t " style="left:389px;top:574px;font-size:11px;color:#000;">Telefon</div>
<div class="t " style="left:513px;top:574px;font-size:11px;color:#000;">Briefanrede</div>
<div class="a sk" style="left:390px;top:593px;width:114px;height:18px;background:#fff"></div>
<div class="t " style="left:393px;top:593px;font-size:11px;color:#000;">+49 8143 4355</div>
<div class="a sk" style="left:514px;top:593px;width:242px;height:18px;background:#fff"></div>
<div class="t " style="left:517px;top:593px;font-size:11px;color:#000;">Familie Franzen,</div>
<div class="t " style="left:386px;top:622px;font-size:11px;color:#000;">Vorbemer<u>k</u>ungen *</div>
<div class="a sk" style="left:386px;top:641px;width:374px;height:58px;background:#fff"></div>
<div class="a sk" style="left:386px;top:712px;width:374px;height:19px;background:#fff"></div>
<div class="t " style="left:389px;top:713px;font-size:11px;color:#000;">Projekt mit Vorgangszweig erstellen</div>
<div class="a rs" style="left:744px;top:714px;width:14px;height:15px;"></div>
<div class="a" style="left:748px;top:721px;width:0;height:0;border-left:4px solid transparent;border-right:4px solid transparent;border-top:4px solid #000"></div>
<svg class="a" style="left:741px;top:491px" width="14" height="22"><path d="M0.8 0.8V16.5L4.3 13L7 19.2L9.4 18.2L6.8 12.2H12Z" fill="#fff" stroke="#000" stroke-width="1.2" stroke-linejoin="round"/></svg>
<div class="a" style="left:703px;top:546px;width:402px;height:143px;box-shadow:0 3px 12px rgba(0,0,0,0.3);border:1px solid #6f6f6f;box-sizing:border-box;background:#f0f0f0"></div>
<div class="a" style="left:704px;top:547px;width:400px;height:25px;background:#fff"></div>
<div class="t " style="left:707px;top:549px;font-size:11.4px;color:#000;">Speichern</div>
<svg class="a" style="left:1084px;top:554px" width="11" height="11"><path d="M0.5 0.5L10.5 10.5M10.5 0.5L0.5 10.5" stroke="#000" stroke-width="1.1"/></svg>
<div class="t " style="left:711px;top:577px;font-size:10.7px;color:#000;">Kurzname der neuen Adresse:</div>
<div class="a rs" style="left:1016px;top:580px;width:78px;height:22px;"></div>
<div class="a" style="left:1016px;top:580px;width:80px;height:24px;border:1px solid #000;background:transparent;box-sizing:border-box;"></div>
<div class="a rs" style="left:1017px;top:581px;width:76px;height:20px;"></div>
<div class="t" style="left:1016px;width:80px;text-align:center;top:582px;font-size:11px;color:#000">OK</div>
<div class="a rs" style="left:1016px;top:608px;width:78px;height:22px;"></div>
<div class="t" style="left:1016px;width:80px;text-align:center;top:610px;font-size:11px;color:#000">Abbrechen</div>
<div class="a sk" style="left:712px;top:660px;width:382px;height:18px;background:#fff"></div>
<div class="t " style="left:715px;top:660px;font-size:11px;color:#000;">franzen</div>
<div class="a" style="left:752px;top:664px;width:1px;height:13px;background:#000"></div>
</body></html>
